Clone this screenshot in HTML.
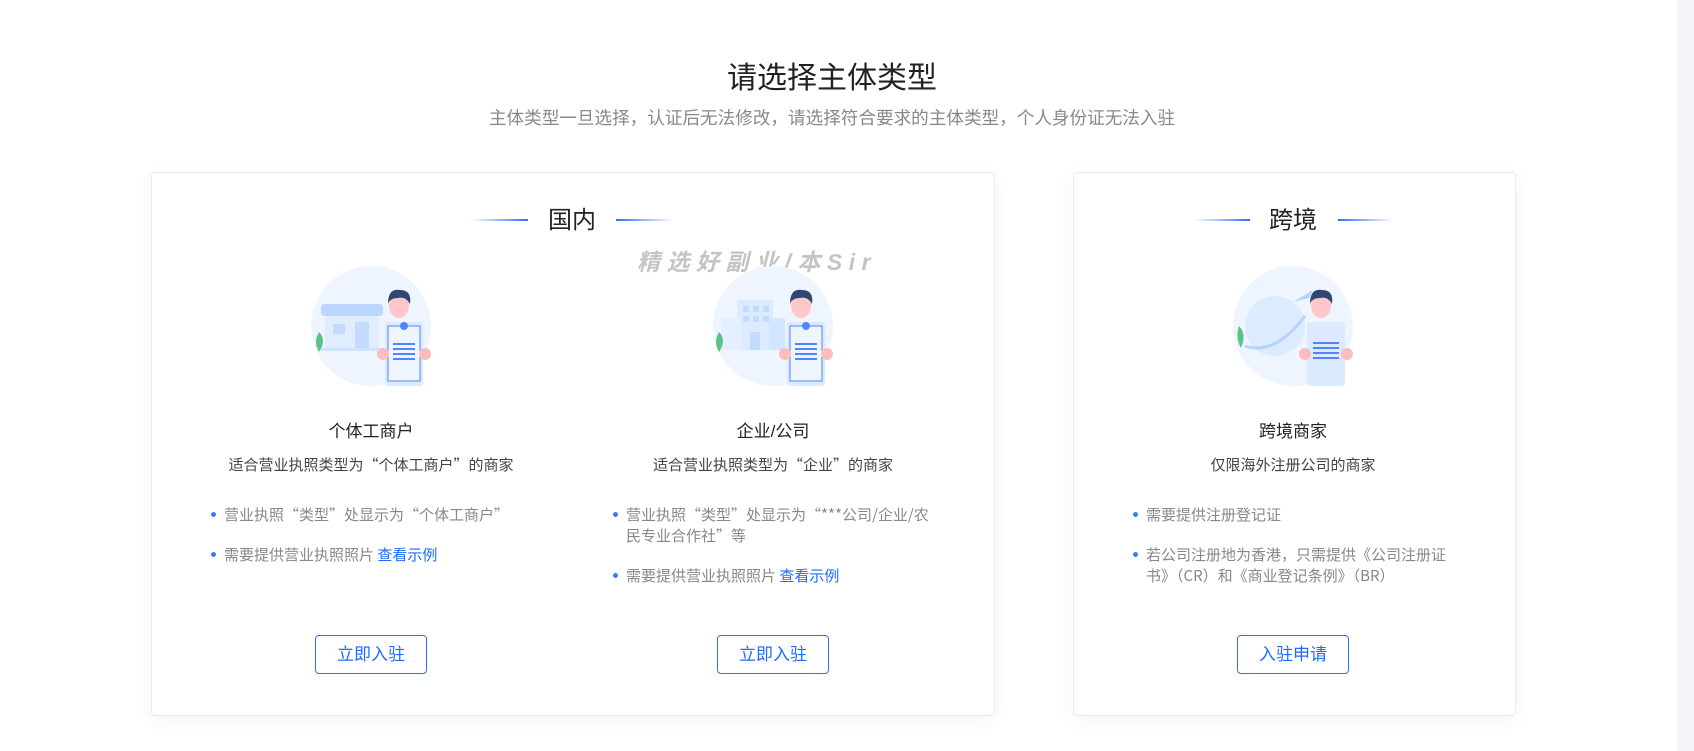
<!DOCTYPE html>
<html><head><meta charset="utf-8"><style>
*{margin:0;padding:0;box-sizing:border-box}
body{width:1694px;height:751px;background:#fff;font-family:"Liberation Sans","Noto Sans CJK SC",sans-serif;position:relative;overflow:hidden}
.q{font-family:"Noto Sans CJK SC",sans-serif}
.sb{position:absolute;left:1677px;top:0;width:17px;height:751px;background:#f4f4f8}
.t{position:absolute;left:0;width:1664px;text-align:center}
.card{position:absolute;top:172px;height:544px;border:1px solid #e8ebf0;border-radius:4px;background:#fff;box-shadow:0 4px 18px rgba(30,60,120,.05)}
.abs{position:absolute}
.hd{font-size:24px;color:#222;text-align:center;width:120px;line-height:30px}
.circ{position:absolute;width:120px;height:120px}
.h{font-size:17px;color:#222;text-align:center;width:340px;line-height:24px}
.d{font-size:15px;color:#444;text-align:center;width:340px;line-height:20px}
.b{font-size:15px;color:#888;line-height:21px;width:318px}
.b:before{content:"";position:absolute;left:-13px;top:8px;width:5px;height:5px;border-radius:50%;background:#3f7bff}
.b a{color:#1f6bff}
.btn{position:absolute;width:112px;height:39px;border:1px solid #2e6fff;border-radius:4px;color:#1f6bff;font-size:17px;text-align:center;line-height:37px}
</style></head><body>
<div class="sb"></div>
<div class="t" style="top:60px;font-size:30px;color:#222;line-height:38px">请选择主体类型</div>
<div class="t q" style="top:106px;font-size:17.6px;color:#888;line-height:24px">主体类型一旦选择，认证后无法修改，请选择符合要求的主体类型，个人身份证无法入驻</div>

<div class="card" style="left:151px;width:844px"></div>
<div class="card" style="left:1073px;width:443px"></div>

<svg width="0" height="0" style="position:absolute"><defs>
<linearGradient id="gl" x1="0" x2="1"><stop offset="0" stop-color="#2e6fff" stop-opacity="0"/><stop offset="1" stop-color="#2e6fff"/></linearGradient>
<linearGradient id="gr" x1="0" x2="1"><stop offset="0" stop-color="#2e6fff"/><stop offset="1" stop-color="#2e6fff" stop-opacity="0"/></linearGradient>
</defs></svg>

<svg class="abs" style="left:470px;top:219px" width="58" height="3"><rect width="58" height="2" fill="url(#gl)"/></svg>
<div class="abs hd" style="left:512px;top:206px">国内</div>
<svg class="abs" style="left:616px;top:219px" width="58" height="3"><rect width="58" height="2" fill="url(#gr)"/></svg>

<svg class="abs" style="left:1194px;top:219px" width="56" height="3"><rect width="56" height="2" fill="url(#gl)"/></svg>
<div class="abs hd" style="left:1233px;top:206px">跨境</div>
<svg class="abs" style="left:1338px;top:219px" width="56" height="3"><rect width="56" height="2" fill="url(#gr)"/></svg>

<div class="abs" style="left:637px;top:248px;font-size:23px;font-weight:bold;font-style:italic;color:#c4c4c4;letter-spacing:6.5px;line-height:28px">精选好副业/本Sir</div>

<svg class="circ" style="left:311px;top:266px" viewBox="0 0 120 120">
<circle cx="60" cy="60" r="60" fill="#eef5ff"/>
<rect x="10" y="38" width="62" height="12" rx="3" fill="#bcd7ff"/>
<rect x="14" y="50" width="54" height="32" fill="#e0edff"/>
<rect x="22" y="58" width="12" height="10" fill="#c3dbff"/><rect x="44" y="56" width="14" height="26" fill="#c3dbff"/>
<rect x="10" y="82" width="62" height="3" fill="#cfe2ff"/>
<path d="M8 66 q8 8 0 20 q-6-10 0-20z" fill="#5cc28a"/>
<ellipse cx="88" cy="40" rx="10" ry="12" fill="#ffc7c7"/><path d="M77 38 q0-16 12-14 q12 0 10 14 q-4-8-12-6 q-8 0-10 6z" fill="#2f4670"/>
<rect x="74" y="56" width="38" height="64" rx="3" fill="#dceaff"/><rect x="77" y="60" width="32" height="55" fill="#eef5ff" stroke="#4d86ff"/>
<circle cx="93" cy="60" r="4" fill="#4d86ff"/>
<rect x="82" y="77" width="22" height="2" fill="#4d86ff"/><rect x="82" y="82" width="22" height="2" fill="#4d86ff"/><rect x="82" y="87" width="22" height="2" fill="#4d86ff"/><rect x="82" y="92" width="22" height="2" fill="#4d86ff"/>
<circle cx="72" cy="88" r="6" fill="#ffbcbc"/><circle cx="114" cy="88" r="6" fill="#ffbcbc"/>
</svg>
<svg class="circ" style="left:713px;top:266px" viewBox="0 0 120 120">
<circle cx="60" cy="60" r="60" fill="#eef5ff"/>
<rect x="24" y="34" width="36" height="50" fill="#dcebff"/><rect x="8" y="52" width="20" height="32" fill="#e4efff"/><rect x="56" y="52" width="16" height="32" fill="#d4e6ff"/>
<g fill="#c3dbff"><rect x="30" y="40" width="6" height="6"/><rect x="40" y="40" width="6" height="6"/><rect x="50" y="40" width="6" height="6"/><rect x="30" y="50" width="6" height="6"/><rect x="40" y="50" width="6" height="6"/><rect x="50" y="50" width="6" height="6"/><rect x="37" y="66" width="10" height="18"/></g>
<path d="M6 66 q8 8 0 20 q-6-10 0-20z" fill="#5cc28a"/>
<ellipse cx="88" cy="40" rx="10" ry="12" fill="#ffc7c7"/><path d="M77 38 q0-16 12-14 q12 0 10 14 q-4-8-12-6 q-8 0-10 6z" fill="#2f4670"/>
<rect x="74" y="56" width="38" height="64" rx="3" fill="#dceaff"/><rect x="77" y="60" width="32" height="55" fill="#eef5ff" stroke="#4d86ff"/>
<circle cx="93" cy="60" r="4" fill="#4d86ff"/>
<rect x="82" y="77" width="22" height="2" fill="#4d86ff"/><rect x="82" y="82" width="22" height="2" fill="#4d86ff"/><rect x="82" y="87" width="22" height="2" fill="#4d86ff"/><rect x="82" y="92" width="22" height="2" fill="#4d86ff"/>
<circle cx="72" cy="88" r="6" fill="#ffbcbc"/><circle cx="114" cy="88" r="6" fill="#ffbcbc"/>
</svg>
<svg class="circ" style="left:1233px;top:266px" viewBox="0 0 120 120">
<circle cx="60" cy="60" r="60" fill="#eef5ff"/>
<circle cx="42" cy="60" r="30" fill="#dcebff"/>
<path d="M12 80 q30 10 60-30" stroke="#b5d2ff" stroke-width="3" fill="none"/>
<path d="M60 36 l20-12 l-4 8z" fill="#b5d2ff"/>
<path d="M6 60 q8 8 2 22 q-6-10-2-22z" fill="#5cc28a"/>
<ellipse cx="88" cy="40" rx="10" ry="12" fill="#ffc7c7"/><path d="M77 38 q0-16 12-14 q12 0 10 14 q-4-8-12-6 q-8 0-10 6z" fill="#2f4670"/>
<rect x="74" y="56" width="38" height="64" rx="3" fill="#dceaff"/>
<rect x="80" y="76" width="26" height="2" fill="#4d86ff"/><rect x="80" y="81" width="26" height="2" fill="#4d86ff"/><rect x="80" y="86" width="26" height="2" fill="#4d86ff"/><rect x="80" y="91" width="26" height="2" fill="#4d86ff"/>
<circle cx="72" cy="88" r="6" fill="#ffbcbc"/><circle cx="114" cy="88" r="6" fill="#ffbcbc"/>
</svg>

<div class="abs h" style="left:201px;top:420px">个体工商户</div>
<div class="abs d q" style="left:201px;top:455px">适合营业执照类型为“个体工商户”的商家</div>
<div class="abs b q" style="left:224px;top:504px">营业执照“类型”处显示为“个体工商户”</div>
<div class="abs b q" style="left:224px;top:544px">需要提供营业执照照片 <a>查看示例</a></div>
<div class="btn" style="left:315px;top:635px">立即入驻</div>

<div class="abs h" style="left:603px;top:420px">企业/公司</div>
<div class="abs d q" style="left:603px;top:455px">适合营业执照类型为“企业”的商家</div>
<div class="abs b q" style="left:626px;top:504px">营业执照“类型”处显示为“***公司/企业/农<br>民专业合作社”等</div>
<div class="abs b q" style="left:626px;top:565px">需要提供营业执照照片 <a>查看示例</a></div>
<div class="btn" style="left:717px;top:635px">立即入驻</div>

<div class="abs h" style="left:1123px;top:420px">跨境商家</div>
<div class="abs d q" style="left:1123px;top:455px">仅限海外注册公司的商家</div>
<div class="abs b q" style="left:1146px;top:504px">需要提供注册登记证</div>
<div class="abs b q" style="left:1146px;top:544px">若公司注册地为香港，只需提供《公司注册证<br>书》（CR）和《商业登记条例》（BR）</div>
<div class="btn" style="left:1237px;top:635px">入驻申请</div>
</body></html>
